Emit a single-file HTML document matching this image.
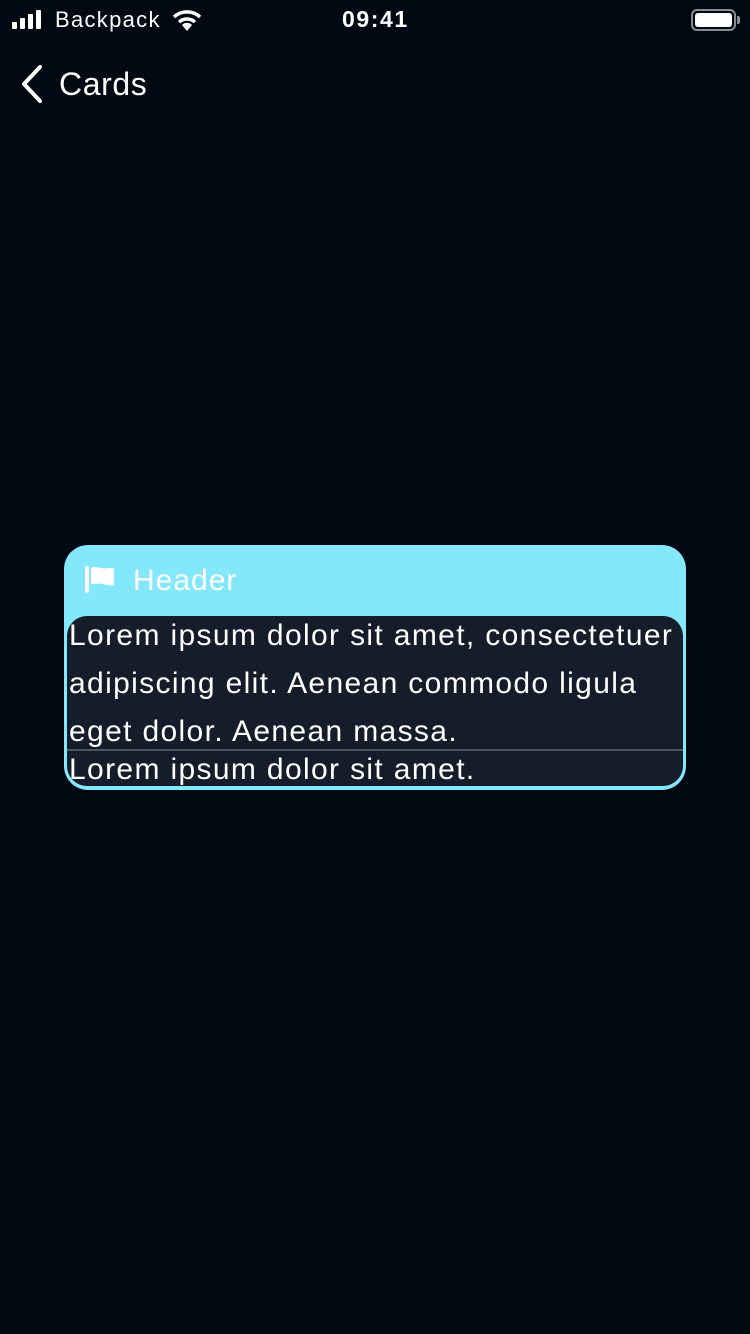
<!DOCTYPE html>
<html><head><meta charset="utf-8"><style>
*{margin:0;padding:0;box-sizing:border-box}
body{width:750px;height:1334px;background:#020912;font-family:"Liberation Sans",sans-serif;color:#fff;position:relative;overflow:hidden}
.abs{position:absolute}
</style></head><body>
<svg class="abs" style="left:12px;top:10px" width="36" height="20"><rect x="0" y="12" width="5" height="7" rx="1" fill="#fff"/><rect x="8" y="8" width="5" height="11" rx="1" fill="#fff"/><rect x="16" y="4" width="5" height="15" rx="1" fill="#fff"/><rect x="24" y="0" width="5" height="19" rx="1" fill="#fff"/></svg>
<div class="abs" style="left:55px;top:7px;font-size:22px;letter-spacing:1.3px">Backpack</div>
<svg class="abs" style="left:172px;top:9px" width="30" height="22" viewBox="0 0 30 22"><path d="M2 8 A19 19 0 0 1 28 8" stroke="#fff" stroke-width="3.5" fill="none"/><path d="M7 13 A12 12 0 0 1 23 13" stroke="#fff" stroke-width="3.5" fill="none"/><path d="M10 16 L15 22 L20 16 A7 7 0 0 0 10 16Z" fill="#fff"/></svg>
<div class="abs" style="left:342px;top:6px;font-size:23px;font-weight:bold;letter-spacing:1.6px">09:41</div>
<div class="abs" style="left:691px;top:9px;width:45px;height:22px;border:2px solid #8a8e94;border-radius:6px;padding:2px"><div style="width:100%;height:100%;background:#fff;border-radius:3px"></div></div>
<div class="abs" style="left:737px;top:16px;width:3px;height:8px;background:#8a8e94;border-radius:0 2px 2px 0"></div>
<svg class="abs" style="left:16px;top:64px" width="28" height="40"><path d="M24 3 L8 20 L24 37" stroke="#fff" stroke-width="4" fill="none" stroke-linecap="round" stroke-linejoin="round"/></svg>
<div class="abs" style="left:59px;top:66px;font-size:32px;letter-spacing:0.6px">Cards</div>
<div class="abs" style="left:64px;top:545px;width:622px;height:245px;background:#84e8fc;border-radius:24px"></div>
<svg class="abs" style="left:85px;top:566px" width="30" height="28"><rect x="0" y="0" width="4" height="27" rx="2" fill="#fff"/><path d="M6 2 C12 -1 16 4 23 2 L29 2 L29 19 C22 21 18 16 12 18 L6 18Z" fill="#fff"/></svg>
<div class="abs" style="left:133px;top:564px;font-size:30px;letter-spacing:1px">Header</div>
<div class="abs" style="left:67px;top:616px;width:616px;height:170px;background:#151d2a;border-radius:20px;overflow:hidden;font-size:30px;line-height:48px;letter-spacing:1.35px">
<div style="padding-left:2px;margin-top:-4px;width:612px">Lorem ipsum dolor sit amet, consectetuer adipiscing elit. Aenean commodo ligula eget dolor. Aenean massa.</div>
<div class="abs" style="left:0;top:133px;width:100%;height:2px;background:#4a5560"></div>
<div class="abs" style="left:2px;top:130px;">Lorem ipsum dolor sit amet.</div>
</div>
</body></html>
